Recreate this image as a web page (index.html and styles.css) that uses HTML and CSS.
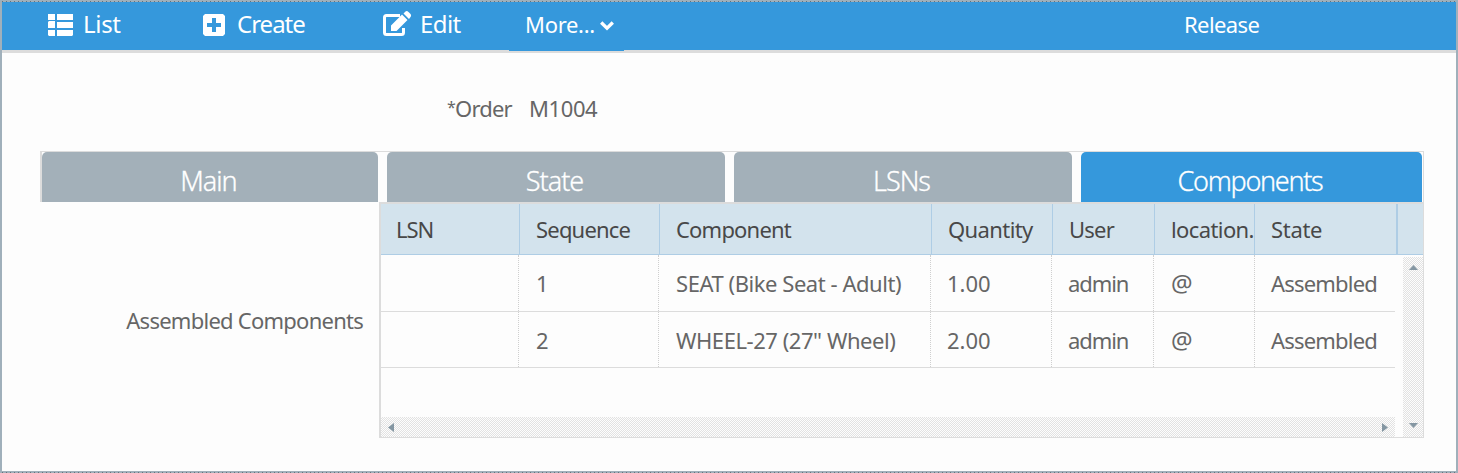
FILE: index.html
```html
<!DOCTYPE html>
<html lang="en">
<head>
<meta charset="utf-8">
<title>Order M1004</title>
<link rel="stylesheet" href="styles.css">
</head>
<body>
<div class="window">
  <header class="toolbar">
    <a class="tool tool-list"><svg class="icon" width="25" height="22" viewBox="0 0 25 22"><path d="M0 0H7V6H0ZM9 0H25V6H9ZM1 7H7V14H0V8ZM9 8H25V14H9ZM0 16H7V22H1L0 21ZM9 16H25V21L24 22H9Z"/></svg><span class="t-list">List</span></a>
    <a class="tool tool-create"><svg class="icon" width="22" height="22" viewBox="0 0 22 22"><path fill-rule="evenodd" d="M2 0H20L22 2V20L20 22H2L0 20V2ZM9 4V9H4V13H9V18H13V13H18V9H13V4Z"/></svg><span class="t-create">Create</span></a>
    <a class="tool tool-edit"><svg class="icon icon-edit" width="29" height="26" viewBox="0 0 29 26"><path fill="none" stroke="#fff" stroke-width="3" d="M17 4.500H3.500Q1.500 4.500 1.500 6.500V21.500Q1.500 23.500 3.500 23.500H18.500Q20.500 23.500 20.500 21.500V17"/><path d="M8 20V14.500L19 3.500L24.500 9L13.500 20ZM20.500 2.500L22.500 0.500Q24 -0.500 25.500 1L27.500 3Q28.700 4.500 27.500 6L26 8Z"/></svg><span class="t-edit">Edit</span></a>
    <a class="tool tool-more"><span class="t-more">More...</span><svg class="icon" width="14" height="10" viewBox="0 0 14 10"><path fill="none" stroke="#fff" stroke-width="3.300" d="M1.200 1.500L7 7.200L12.800 1.500"/></svg></a>
    <a class="tool tool-release"><span class="t-release">Release</span></a>
  </header>
  <main class="content">
    <div class="field"><label class="t-order"><span class="star">*</span>Order</label><span class="t-number">M1004</span></div>
    <nav class="tabs">
      <a class="tab"><span>Main</span></a>
      <a class="tab"><span>State</span></a>
      <a class="tab"><span>LSNs</span></a>
      <a class="tab active"><span>Components</span></a>
    </nav>
    <section class="panel">
      <div class="panel-label"><span class="t-label">Assembled Components</span></div>
      <div class="grid">
        <div class="row head">
          <div><span class="h-lsn">LSN</span></div><div><span class="h-seq">Sequence</span></div><div><span class="h-comp">Component</span></div><div><span class="h-qty">Quantity</span></div><div><span class="h-user">User</span></div><div><span class="h-loc">location.</span></div><div><span class="h-state">State</span></div><div class="corner"></div>
        </div>
        <div class="grid-body">
          <div class="viewport">
            <div class="row"><div></div><div>1</div><div><span class="c-name">SEAT (Bike Seat - Adult)</span></div><div class="near">1.00</div><div class="near"><span class="c-user">admin</span></div><div class="c-at">@</div><div><span class="c-state">Assembled</span></div></div>
            <div class="row"><div></div><div>2</div><div><span class="c-name">WHEEL-27 (27" Wheel)</span></div><div class="near">2.00</div><div class="near"><span class="c-user">admin</span></div><div class="c-at">@</div><div><span class="c-state">Assembled</span></div></div>
            <div class="hscroll"><svg width="6" height="9" viewBox="0 0 6 9"><path d="M6 0V9L0 4.500Z"/></svg><svg width="6" height="9" viewBox="0 0 6 9"><path d="M0 0V9L6 4.500Z"/></svg></div>
          </div>
          <div class="vscroll"><svg width="9" height="5" viewBox="0 0 9 5"><path d="M0 5H9L4.500 0Z"/></svg><svg width="9" height="5" viewBox="0 0 9 5"><path d="M0 0H9L4.500 5Z"/></svg></div>
        </div>
      </div>
    </section>
  </main>
</div>
</body>
</html>
```
FILE: styles.css
```css
* { box-sizing: border-box; }
body { margin: 0; font-family: "Noto Sans", "Open Sans", sans-serif; font-size: 22px; color: #666; }
span, label { white-space: nowrap; }
svg { display: block; flex: none; }

.window { width: 1458px; height: 473px; border: 2px solid #a0b0bb; background: #fdfdfd; position: relative; }
.window::before,
.window::after { content: ""; position: absolute; left: 0; right: 0; height: 1px; background: repeating-linear-gradient(90deg, #66727b 0 1px, transparent 1px 4px); }
.window::before { top: -1px; }
.window::after { bottom: -2px; }

.toolbar { height: 51px; display: flex; background: #3598dc; border-bottom: 3px solid #dcdcdc; color: #fff; }
.tool { display: flex; height: 49px; padding-bottom: 3px; align-items: center; background: #3598dc; font-size: 24px; line-height: 44px; flex: none; }
.tool > span { height: 46px; }
.icon { fill: #fff; }
.tool-list, .tool-create, .tool-edit { height: 48px; }
.tool-list { width: 155px; padding-left: 46px; gap: 10px; }
.tool-create { width: 180px; padding-left: 46px; gap: 12px; }
.tool-edit { width: 172px; padding-left: 46px; gap: 8px; }
.icon-edit { margin-top: -1px; }
.tool-more { width: 115px; padding-left: 16px; gap: 5px; font-size: 22px; }
.tool-more .icon { margin-top: 2px; }
.tool-release { margin-left: 560px; height: 48px; font-size: 22px; }

.content { padding: 39px 32px 0 38px; }
.field { display: flex; padding-left: 407px; height: 59px; line-height: 33px; }
.t-order { width: 82px; }
.star { display: inline-block; width: 8px; font-size: 16px; line-height: 1; vertical-align: 4px; }
.tabs { display: grid; grid-template-columns: 336px 338px 338px 341px; column-gap: 9px; width: 1384px; height: 51px; border: solid #dcdcdc; border-width: 1px 1px 0 2px; }
.tab { height: 50px; display: flex; justify-content: center; padding-right: 3px; background: #a3b0b9; color: #fff; border-radius: 5px 5px 0 0; font-family: "Noto Sans", sans-serif; font-size: 27px; font-weight: 300; line-height: 57px; letter-spacing: -1px; -webkit-text-stroke: 0.3px #fff; }
.tab.active { background: #3598dc; letter-spacing: -1.300px; }

.panel { display: flex; width: 1384px; }
.panel-label { width: 339px; display: flex; justify-content: flex-end; padding-right: 16px; height: 236px; line-height: 236px; }
.grid { width: 1045px; height: 236px; border: solid #dcdcdc; border-width: 2px 1px 1px 2px; }
.row { display: grid; grid-template-columns: 138px 140px 272px 121px 102px 101px 140px; height: 56px; line-height: 56px; border-bottom: 1px solid #dcdcdc; }
.row > div { height: 100%; padding-left: 17px; border-right: 1px dotted #cfcfcf; white-space: nowrap; }
.viewport .row { grid-template-rows: 100%; }
.row > div:last-child { border-right: 0; padding-left: 16px; }
.row > .near { padding-left: 16px; }
.row.head { grid-template-columns: 139px 140px 272px 121px 102px 100px 143px 1fr; height: 51px; line-height: 51px; background: #d3e3ed; color: #484848; border-color: #aecde5; }
.row.head > div { border-right: 1px solid #aecde5; padding-left: 16px; }
.row.head > div:first-child { padding-left: 15px; }
.row.head > div:nth-child(7) { border-right-width: 2px; }
.row.head > .corner { border-right: 0; padding: 0; }
.grid-body { display: flex; justify-content: space-between; height: 182px; }
.viewport { width: 1014px; display: flex; flex-direction: column; }
.viewport .row:first-child { height: 57px; }
.hscroll { margin-top: auto; height: 20px; display: flex; justify-content: space-between; align-items: center; padding: 0 7px; }
.vscroll { width: 20px; margin-top: 2px; display: flex; flex-direction: column; justify-content: space-between; align-items: center; padding: 8px 0 9px; }
.hscroll, .vscroll { background: conic-gradient(#e2e2e2 25%, #fdfdfd 0 50%, #e2e2e2 0 75%, #fdfdfd 0) 0 0 / 2px 2px; fill: #8496a2; }

/* Tracking */
.t-list, .t-more { letter-spacing: -0.3px; }
.t-create { letter-spacing: -1px; }
.t-edit, .t-release { letter-spacing: -0.6px; }
.t-order { letter-spacing: -0.8px; }
.t-number { letter-spacing: -0.4px; }
.t-label { letter-spacing: -0.75px; }
.h-lsn { letter-spacing: -1px; }
.h-seq, .h-comp, .h-user { letter-spacing: -0.8px; }
.h-qty, .h-loc { letter-spacing: -0.6px; }
.h-state { letter-spacing: -0.3px; }
.c-name { letter-spacing: -0.45px; }
.c-user { letter-spacing: -1.1px; }
.c-state { letter-spacing: -0.8px; }
.row > .c-at { font-size: 24px; }
```
